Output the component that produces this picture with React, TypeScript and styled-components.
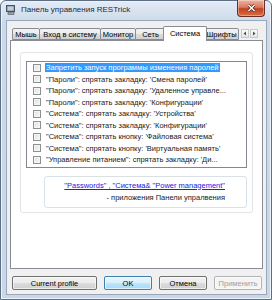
import React from 'react';
import styled, { createGlobalStyle } from 'styled-components';

const GlobalStyle = createGlobalStyle`
  html, body {
    margin: 0;
    padding: 0;
    background: #ffffff;
  }
  body {
    font-family: "Liberation Sans", Arial, sans-serif;
    font-size: 7.5px;
    color: #000000;
  }
`;

// Window frame
const Window = styled.div`
  width: 272px;
  height: 300px;
  box-sizing: border-box;
  display: flex;
  flex-direction: column;
  border: 1px solid #5d6f85;
  border-radius: 6px 6px 0 0;
  background: linear-gradient(#e3ebf5, #cdd9e9 22px, #c9d7e7);
  box-shadow: inset 0 0 0 1px #eef3f9;
`;

const TitleBar = styled.div`
  display: flex;
  align-items: flex-start;
  height: 19px;
  flex-shrink: 0;
`;

const TitleIcon = styled.svg`
  width: 10px;
  height: 10px;
  margin: 4px 0 0 5px;
  flex-shrink: 0;
`;

const TitleText = styled.div`
  margin: 3px 0 0 5px;
  font-size: 8px;
  line-height: 12px;
  color: #1e2a38;
`;

const CloseButton = styled.div`
  margin: -1px 6px 0 auto;
  width: 28px;
  height: 17px;
  box-sizing: border-box;
  display: flex;
  align-items: center;
  justify-content: center;
  border: 1px solid #6b2f27;
  border-top: none;
  border-radius: 0 0 4px 4px;
  background: linear-gradient(#eeb2a0, #d97a62 45%, #c3401f 55%, #d66f48);
  box-shadow: inset 0 0 0 1px rgba(255, 255, 255, 0.35);
`;

const Client = styled.div`
  flex: 1;
  margin: 0 4px 4px 5px;
  padding: 5px 3px 4px 3px;
  display: flex;
  flex-direction: column;
  background: #f0f0f0;
  border: 1px solid #97a8bc;
`;

// Tabs
const TabStrip = styled.div`
  display: flex;
  align-items: flex-end;
  height: 14px;
  padding-left: 2px;
  flex-shrink: 0;
  position: relative;
  z-index: 1;
`;

const Tab = styled.div<{ $w: number; $active?: boolean }>`
  width: ${p => p.$w}px;
  flex-shrink: 0;
  box-sizing: border-box;
  height: ${p => (p.$active ? 15 : 12)}px;
  margin: ${p => (p.$active ? '0 -2px -1px -3px' : '0 0 0 -1px')};
  display: flex;
  align-items: center;
  justify-content: center;
  white-space: nowrap;
  border: 1px solid #898c95;
  border-bottom: ${p => (p.$active ? 'none' : '1px solid #898c95')};
  border-radius: 2px 2px 0 0;
  background: ${p => (p.$active ? '#ffffff' : 'linear-gradient(#f3f3f3, #ebebeb 50%, #dddddd 51%, #cfcfcf)')};
  padding-bottom: ${p => (p.$active ? 2 : 0)}px;
  position: relative;
  z-index: ${p => (p.$active ? 2 : 0)};
  &:first-child {
    margin-left: 0;
  }
`;

const Arrows = styled.div`
  display: flex;
  gap: 1px;
  margin: 0 5px 2px auto;
`;

const ArrowButton = styled.div`
  width: 8px;
  height: 9px;
  box-sizing: border-box;
  display: flex;
  align-items: center;
  justify-content: center;
  border: 1px solid #c5c9cf;
  background: linear-gradient(#fbfbfb, #e6e6e6);
`;

const Panel = styled.div`
  flex: 1;
  min-height: 0;
  box-sizing: border-box;
  background: #ffffff;
  border: 1px solid #898c95;
  padding: 11px 9px 0 9px;
`;

const GroupBox = styled.div`
  height: 161px;
  box-sizing: border-box;
  border: 1px solid #e4e4e4;
  border-radius: 3px;
  padding: 8px 5px 0 5px;
`;

// Checked list
const List = styled.div`
  box-sizing: border-box;
  border: 1px solid #828790;
  padding: 0 0 1px 0;
`;

const Row = styled.div`
  display: flex;
  align-items: center;
  height: 11.5px;
  padding-left: 6px;
  white-space: nowrap;
  overflow: hidden;
`;

const Check = styled.span`
  width: 8px;
  height: 8px;
  box-sizing: border-box;
  flex-shrink: 0;
  border: 1px solid #8e8f8f;
  background: linear-gradient(135deg, #dcdcdc, #fbfbfb);
  box-shadow: inset 0 0 0 1px #f4f4f4;
`;

const RowLabel = styled.span<{ $selected?: boolean }>`
  margin-left: 4px;
  padding: 0 1px;
  line-height: 9px;
  background: ${p => (p.$selected ? '#3399ff' : 'transparent')};
  color: ${p => (p.$selected ? '#ffffff' : '#1a1a1a')};
`;

const LinkBox = styled.div`
  height: 32px;
  box-sizing: border-box;
  margin: 8px 0 0 18px;
  padding: 3px 21px 0 0;
  border: 1px solid #d9e0e6;
  border-radius: 3px;
  text-align: right;
  line-height: 12px;
  white-space: nowrap;
  color: #1a1a1a;
`;

const Link = styled.a`
  color: #2020e0;
  text-decoration: underline;
`;

// Bottom buttons
const ButtonRow = styled.div`
  display: flex;
  gap: 7px;
  margin-top: 7px;
  padding-left: 2px;
  flex-shrink: 0;
`;

const Button = styled.div<{ $w: number; $default?: boolean; $disabled?: boolean }>`
  width: ${p => p.$w}px;
  height: 14px;
  box-sizing: border-box;
  display: flex;
  align-items: center;
  justify-content: center;
  border: 1px solid ${p => (p.$default ? '#3c7fb1' : p.$disabled ? '#adb2b5' : '#707070')};
  border-radius: 2px;
  background: ${p =>
    p.$disabled
      ? '#f4f4f4'
      : p.$default
      ? 'linear-gradient(#eaf6fd, #d9f0fc 50%, #bee6fd 51%, #a7d9f5)'
      : 'linear-gradient(#f2f2f2, #ebebeb 50%, #dddddd 51%, #cfcfcf)'};
  color: ${p => (p.$disabled ? '#a0a0a0' : '#000000')};
  box-shadow: inset 0 0 0 1px rgba(255, 255, 255, 0.6);
  white-space: nowrap;
`;

const tabs = [
  { label: 'Мышь', w: 28 },
  { label: 'Вход в систему', w: 62 },
  { label: 'Монитор', w: 36 },
  { label: 'Сеть', w: 31 },
  { label: 'Система', w: 44, active: true },
  { label: 'Шрифты', w: 35 },
];

const items = [
  'Запретить запуск программы изменения паролей',
  '"Пароли": спрятать закладку: \'Смена паролей\'',
  '"Пароли": спрятать закладку: \'Удаленное управле...',
  '"Пароли": спрятать закладку: \'Конфигурации\'',
  '"Система": спрятать закладку: \'Устройства\'',
  '"Система": спрятать закладку: \'Конфигурации\'',
  '"Система": спрятать кнопку: \'Файловая система\'',
  '"Система": спрятать кнопку: \'Виртуальная память\'',
  '"Управление питанием": спрятать закладку: \'Ди...',
];

const App = () => {
  return (
    <>
      <GlobalStyle />
      <Window>
        <TitleBar>
          <TitleIcon viewBox="0 0 10 10">
            <rect x="0.5" y="0.5" width="8" height="6" fill="#7f8a96" stroke="#4a525c" strokeWidth="1" />
            <rect x="1.5" y="1.5" width="6" height="4" fill="#b9d2e6" />
            <rect x="2" y="7" width="6" height="2.5" fill="#9aa3ad" stroke="#4a525c" strokeWidth="0.6" />
          </TitleIcon>
          <TitleText>Панель управления RESTrick</TitleText>
          <CloseButton>
            <svg width="9" height="8" viewBox="0 0 9 8">
              <path d="M1.5 1 L7.5 7 M7.5 1 L1.5 7" stroke="#3b1a14" strokeWidth="2.6" />
              <path d="M1.5 1 L7.5 7 M7.5 1 L1.5 7" stroke="#ffffff" strokeWidth="1.5" />
            </svg>
          </CloseButton>
        </TitleBar>
        <Client>
          <TabStrip>
            {tabs.map(t => (
              <Tab key={t.label} $w={t.w} $active={t.active}>
                {t.label}
              </Tab>
            ))}
            <Arrows>
              <ArrowButton>
                <svg width="4" height="5" viewBox="0 0 4 5">
                  <path d="M3 0.5 L0.5 2.5 L3 4.5 Z" fill="#4d4d4d" />
                </svg>
              </ArrowButton>
              <ArrowButton>
                <svg width="4" height="5" viewBox="0 0 4 5">
                  <path d="M1 0.5 L3.5 2.5 L1 4.5 Z" fill="#4d4d4d" />
                </svg>
              </ArrowButton>
            </Arrows>
          </TabStrip>
          <Panel>
            <GroupBox>
              <List>
                {items.map((text, i) => (
                  <Row key={i}>
                    <Check />
                    <RowLabel $selected={i === 0}>{text}</RowLabel>
                  </Row>
                ))}
              </List>
              <LinkBox>
                <Link>"Passwords" , "Система&amp; "Power management"</Link>
                <div>- приложения Панели упралвения</div>
              </LinkBox>
            </GroupBox>
          </Panel>
          <ButtonRow>
            <Button $w={85}>Current profile</Button>
            <Button $w={48} $default>OK</Button>
            <Button $w={48}>Отмена</Button>
            <Button $w={48} $disabled>Применить</Button>
          </ButtonRow>
        </Client>
      </Window>
    </>
  );
};

export default App;
